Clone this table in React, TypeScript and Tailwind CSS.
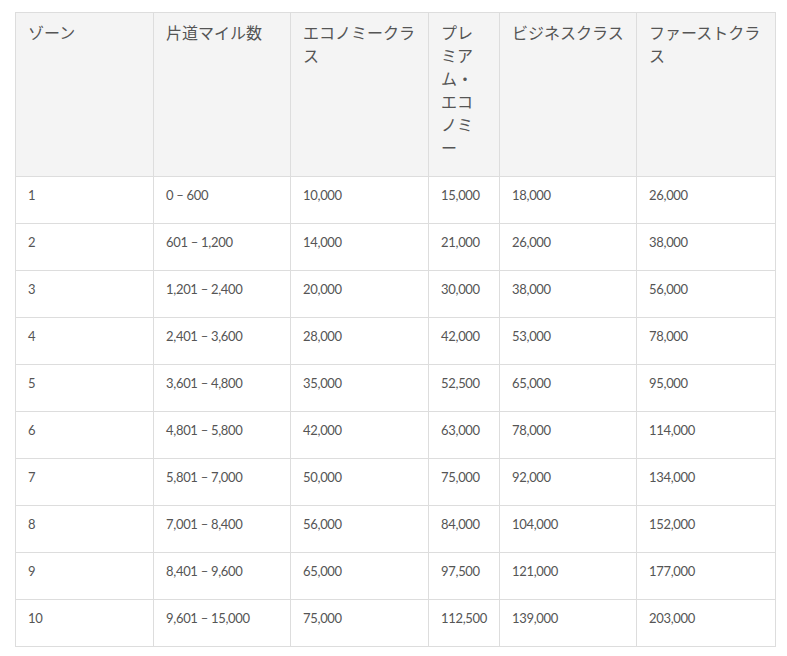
const HEADERS = ["ゾーン", "片道マイル数", "エコノミークラス", "プレミアム・エコノミー", "ビジネスクラス", "ファーストクラス"];

const ROWS = [
  ["1", "0 – 600", "10,000", "15,000", "18,000", "26,000"],
  ["2", "601 – 1,200", "14,000", "21,000", "26,000", "38,000"],
  ["3", "1,201 – 2,400", "20,000", "30,000", "38,000", "56,000"],
  ["4", "2,401 – 3,600", "28,000", "42,000", "53,000", "78,000"],
  ["5", "3,601 – 4,800", "35,000", "52,500", "65,000", "95,000"],
  ["6", "4,801 – 5,800", "42,000", "63,000", "78,000", "114,000"],
  ["7", "5,801 – 7,000", "50,000", "75,000", "92,000", "134,000"],
  ["8", "7,001 – 8,400", "56,000", "84,000", "104,000", "152,000"],
  ["9", "8,401 – 9,600", "65,000", "97,500", "121,000", "177,000"],
  ["10", "9,601 – 15,000", "75,000", "112,500", "139,000", "203,000"],
];

export default function App() {
  return (
    <div className="min-h-screen bg-white pt-[12px] pl-[15px] font-['Lato','Noto_Sans_CJK_JP',sans-serif]">
      <table className="w-[760px] table-fixed border-collapse text-[#555]">
        <colgroup>
          <col className="w-[138px]" />
          <col className="w-[137px]" />
          <col className="w-[138px]" />
          <col className="w-[71px]" />
          <col className="w-[137px]" />
          <col className="w-[139px]" />
        </colgroup>
        <thead>
          <tr className="bg-[#f4f4f4]">
            {HEADERS.map((h) => (
              <th
                key={h}
                className="border border-[#dddddd] px-[12px] pt-[8px] pb-[17px] text-left align-top text-[16px] font-normal leading-[23px] font-['Noto_Sans_CJK_JP',sans-serif] text-[#555]"
              >
                {h}
              </th>
            ))}
          </tr>
        </thead>
        <tbody>
          {ROWS.map((row) => (
            <tr key={row[0]}>
              {row.map((cell, i) => (
                <td
                  key={i}
                  className="border border-[#dddddd] px-[12px] pt-[8px] pb-[18px] align-top text-[13px] leading-5 tracking-[-0.3px] whitespace-nowrap"
                >
                  {cell}
                </td>
              ))}
            </tr>
          ))}
        </tbody>
      </table>
    </div>
  );
}
